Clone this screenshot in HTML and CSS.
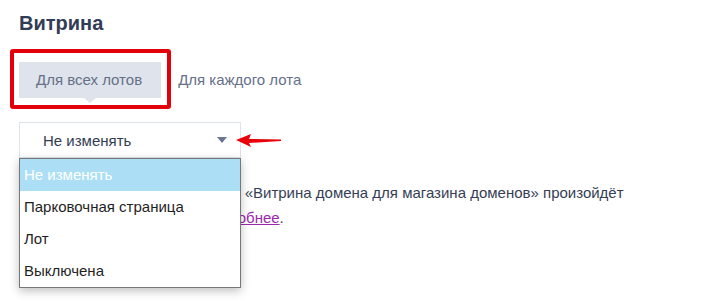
FILE: index.html
```html
<!DOCTYPE html>
<html lang="ru">
<head>
<meta charset="utf-8">
<title>Витрина</title>
<link rel="stylesheet" href="styles.css">
</head>
<body>
<div class="page">
  <h2 class="title">Витрина</h2>
  <div class="tabs">
    <div class="tab tab-active">Для всех лотов</div>
    <div class="tab">Для каждого лота</div>
    <div class="mark-box"></div>
  </div>
  <div class="select-wrap">
    <div class="select">
      <span class="select-value">Не изменять</span>
      <span class="caret"></span>
    </div>
    <svg class="mark-arrow" width="50" height="20" viewBox="0 0 50 20">
      <path d="M2 9 L17 3 L15 8 L47 8.5 L47 10 L15 12 L17 16 Z" fill="#e8000b"/>
    </svg>
    <ul class="menu">
      <li class="menu-item menu-item-active">Не изменять</li>
      <li class="menu-item">Парковочная страница</li>
      <li class="menu-item">Лот</li>
      <li class="menu-item">Выключена</li>
    </ul>
  </div>
  <p class="note">При изменении значения опции «Витрина домена для магазина доменов» произойдёт изменение во всех лотах. <a href="#" class="link">Подробнее</a>.</p>
</div>
</body>
</html>
```

FILE: styles.css
```css
html, body {
  margin: 0;
  padding: 0;
  background: #ffffff;
}
body {
  font-family: "Liberation Sans", Arial, sans-serif;
  color: #353e55;
}
.page {
  box-sizing: border-box;
  min-height: 307px;
  padding: 0 19px;
}
.title {
  margin: 11px 0 0;
  font-size: 20px;
  line-height: 24px;
  font-weight: bold;
  color: #323c56;
}
.tabs {
  position: relative;
  display: flex;
  align-items: center;
  margin-top: 27px;
  height: 36px;
}
.tab {
  height: 36px;
  line-height: 36px;
  padding: 0 18px 0 17px;
  font-size: 15px;
  color: #65708a;
}
.tab-active {
  position: relative;
  background: #dfe3eb;
  padding: 0 19px 0 17px;
}
.tab-active::after {
  content: "";
  position: absolute;
  left: 65px;
  bottom: -5px;
  border-left: 6px solid transparent;
  border-right: 6px solid transparent;
  border-top: 5px solid #dfe3eb;
}
.mark-box {
  position: absolute;
  left: -9px;
  top: -13px;
  width: 153px;
  height: 52px;
  border: 4px solid #e2000a;
  border-radius: 3px;
}
.select-wrap {
  position: relative;
  margin-top: 24px;
  width: 222px;
}
.select {
  box-sizing: border-box;
  display: flex;
  align-items: center;
  justify-content: space-between;
  height: 36px;
  padding: 0 13px 0 23px;
  border: 1px solid #dfe3ea;
  font-size: 15px;
  color: #333b52;
}
.caret {
  width: 0;
  height: 0;
  border-left: 5px solid transparent;
  border-right: 5px solid transparent;
  border-top: 6px solid #6a7690;
}
.mark-arrow {
  position: absolute;
  left: 215px;
  top: 9px;
}
.menu {
  position: absolute;
  left: 0;
  top: 36px;
  z-index: 2;
  box-sizing: border-box;
  width: 222px;
  margin: 0;
  padding: 0;
  list-style: none;
  background: #ffffff;
  border: 1px solid #777777;
  box-shadow: 0 3px 9px rgba(0, 0, 0, 0.25);
}
.menu-item {
  height: 32px;
  line-height: 32px;
  padding-left: 4px;
  font-size: 15px;
  color: #1f1f1f;
}
.menu-item-active {
  background: #acdff5;
  color: #ffffff;
}
.note {
  margin: 22px 0 0;
  width: 640px;
  font-size: 15px;
  line-height: 25px;
  color: #353e55;
}
.link {
  color: #9b27ae;
  text-decoration: underline;
}
```
